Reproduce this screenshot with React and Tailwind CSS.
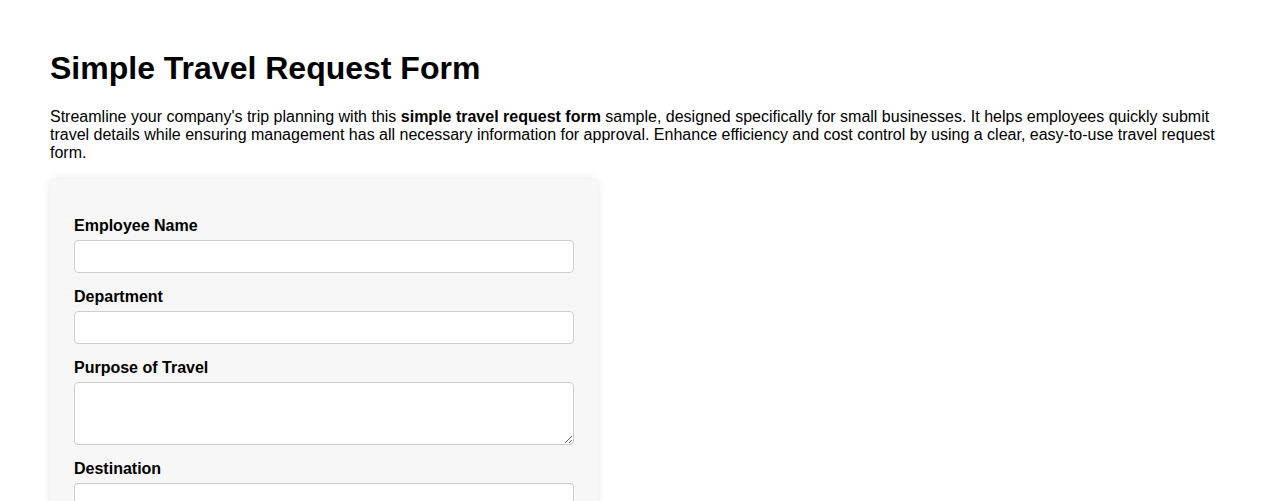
import React from "react";

const fields = [
  { label: "Employee Name", type: "input" },
  { label: "Department", type: "input" },
  { label: "Purpose of Travel", type: "textarea" },
  { label: "Destination", type: "input" },
  { label: "Departure Date", type: "input" },
];

const App = () => {
  return (
    <div className="min-h-screen bg-white px-[50px] pt-[50px] pb-10 text-black font-['Liberation_Sans',Arial,sans-serif]">
      <h1 className="text-[32px] leading-[37px] font-bold">Simple Travel Request Form</h1>

      <p className="mt-[21px] text-base leading-[18px] pr-[2px]">
        Streamline your company's trip planning with this{" "}
        <strong className="font-bold">simple travel request form</strong> sample, designed specifically for
        small businesses. It helps employees quickly submit travel details while ensuring management has all
        necessary information for approval. Enhance efficiency and cost control by using a clear, easy-to-use
        travel request form.
      </p>

      <form className="mt-[17px] w-[548px] rounded-lg bg-[#f7f7f7] px-6 pt-[38px] pb-6 shadow-[0_0_10px_rgba(0,0,0,0.1)]">
        {fields.map((f) => (
          <div key={f.label} className="mb-[15px]">
            <label className="block mb-[5px] text-base leading-[18px] font-bold">{f.label}</label>
            {f.type === "textarea" ? (
              <textarea
                rows={3}
                className="block w-[500px] h-[63px] rounded border border-[#ccc] bg-white p-2 text-base"
              />
            ) : (
              <input
                type="text"
                className="block w-[500px] h-[33px] rounded border border-[#ccc] bg-white px-2 text-base"
              />
            )}
          </div>
        ))}
      </form>
    </div>
  );
};

export default App;
